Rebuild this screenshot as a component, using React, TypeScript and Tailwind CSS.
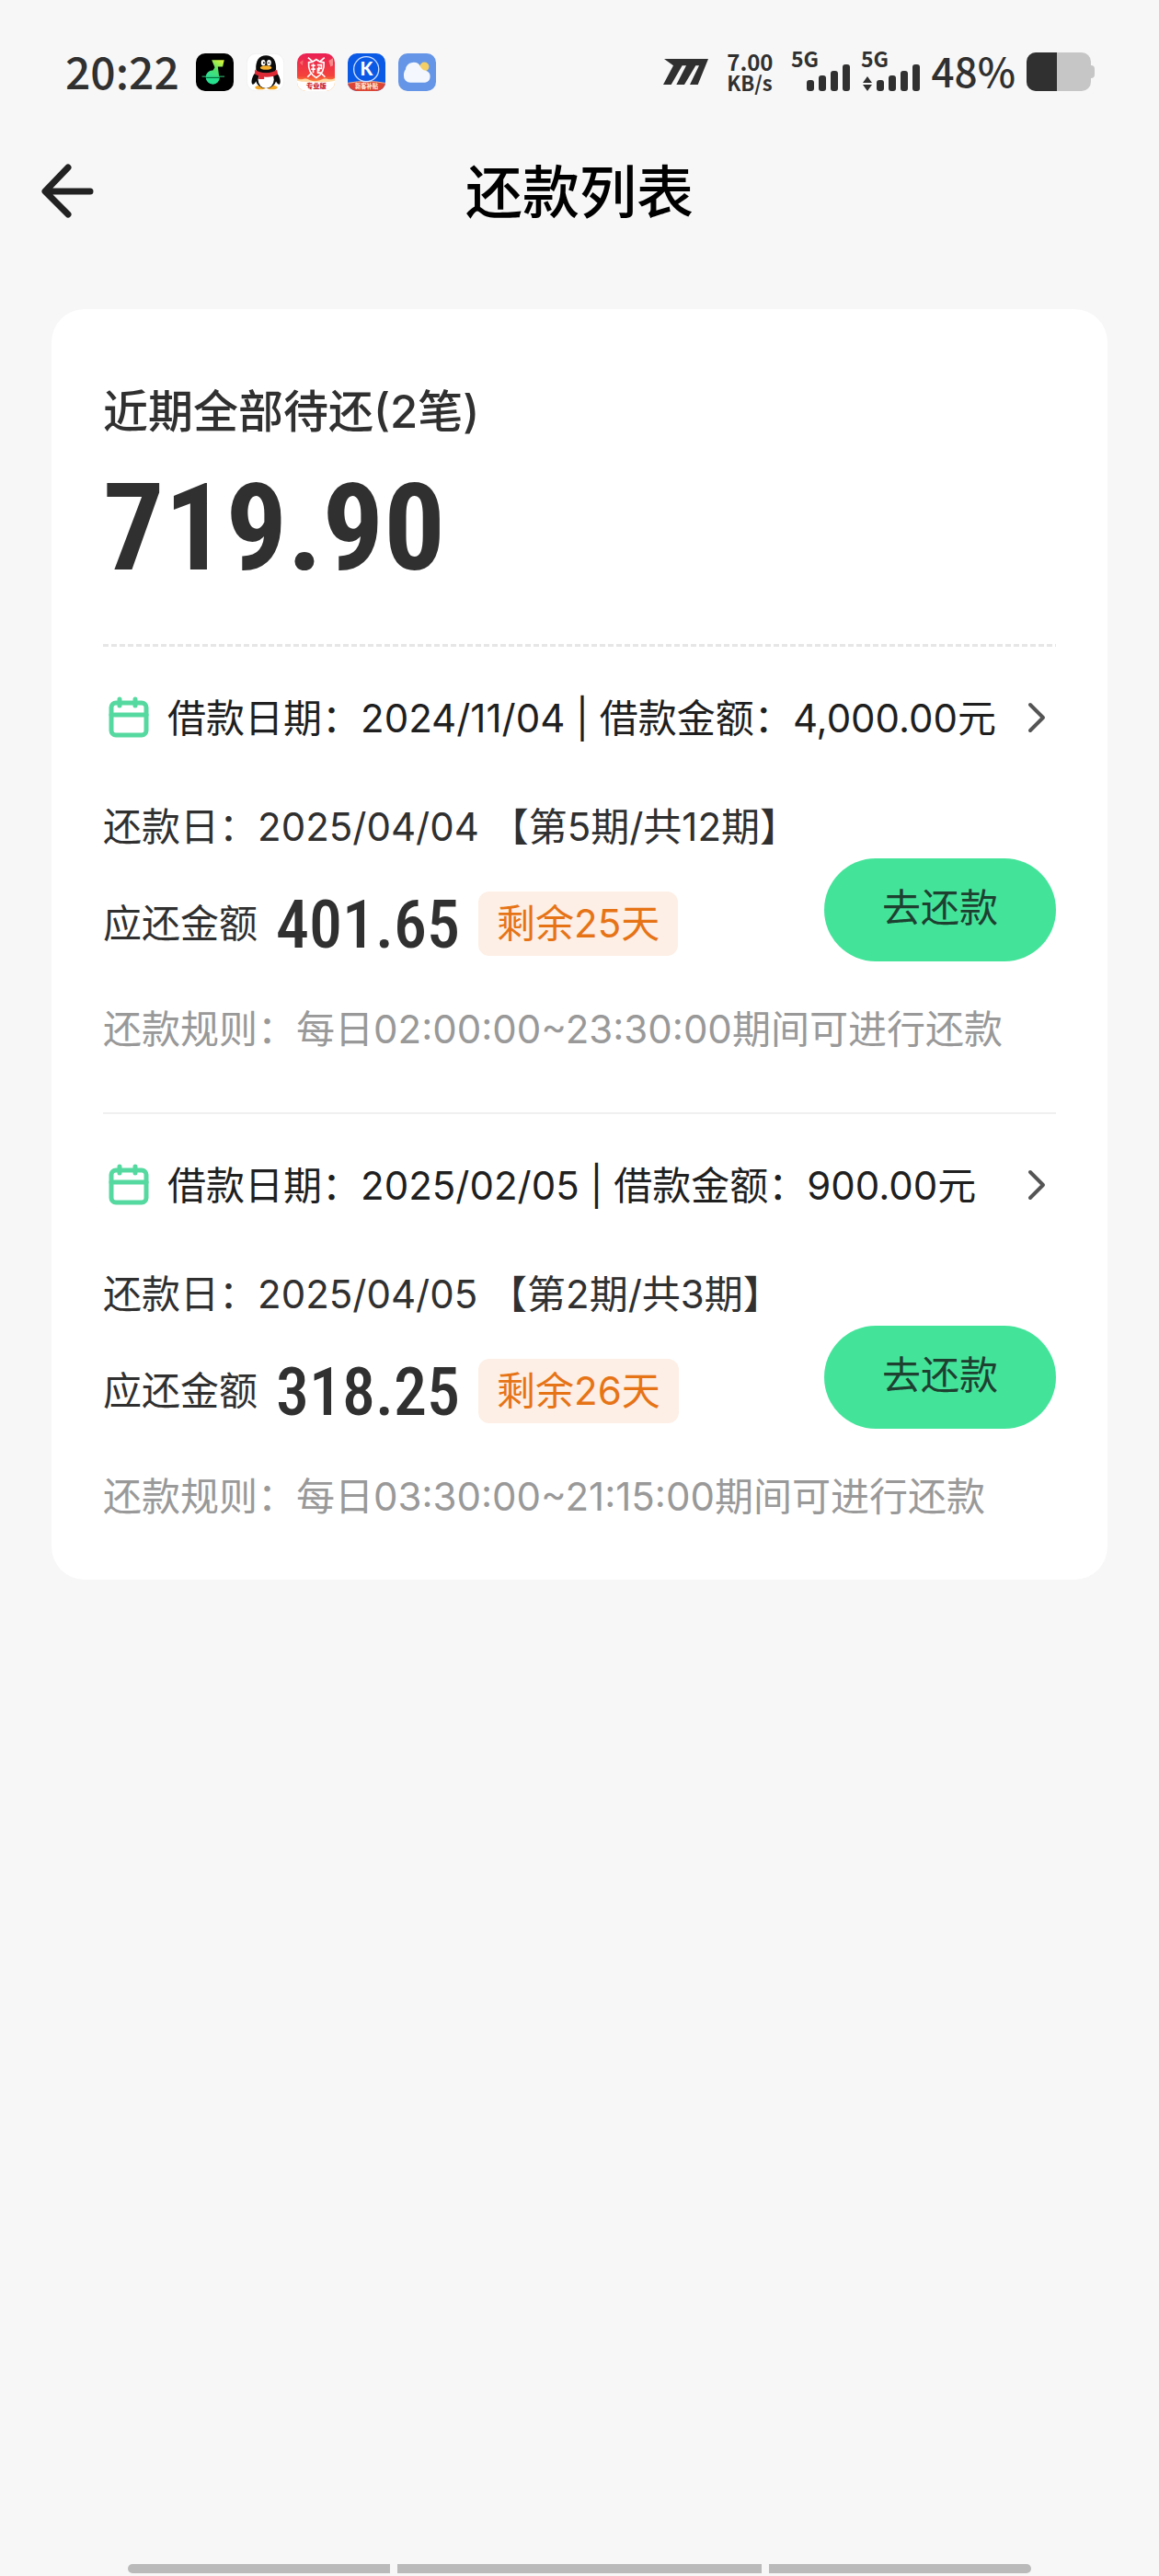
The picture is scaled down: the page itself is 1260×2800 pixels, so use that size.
import React from 'react';

interface Loan {
  id: number;
  loanDate: string;
  loanAmount: string;
  dueDate: string;
  period: string;
  due: string;
  daysLeft: number;
  window: string;
}

const loans: Loan[] = [
  {
    id: 1,
    loanDate: '2024/11/04',
    loanAmount: '4,000.00',
    dueDate: '2025/04/04',
    period: '第5期/共12期',
    due: '401.65',
    daysLeft: 25,
    window: '02:00:00~23:30:00',
  },
  {
    id: 2,
    loanDate: '2025/02/05',
    loanAmount: '900.00',
    dueDate: '2025/04/05',
    period: '第2期/共3期',
    due: '318.25',
    daysLeft: 26,
    window: '03:30:00~21:15:00',
  },
];

function MusicIcon() {
  return (
    <svg viewBox="0 0 124 124" className="w-[41px] h-[41px]">
      <defs>
        <linearGradient id="note" x1="0.8" y1="0" x2="0.3" y2="1">
          <stop offset="0" stopColor="#d8f53c" />
          <stop offset="0.45" stopColor="#4de06a" />
          <stop offset="1" stopColor="#1fe3b0" />
        </linearGradient>
      </defs>
      <rect width="124" height="124" rx="30" fill="#000" />
      <path d="M52 22H93L88 44H72L76 74A22 22 0 1 1 56 56L62 46Z" fill="url(#note)" />
      <path d="M32 76H78V80A22 22 0 0 1 34 80Z" fill="#27e08d" />
      <path d="M20 76H94" stroke="#35c97d" strokeWidth="3" />
      <path d="M34 80H78" stroke="#063" strokeWidth="3" />
    </svg>
  );
}

function PenguinIcon() {
  return (
    <svg viewBox="0 0 124 124" className="w-[41px] h-[41px]">
      <rect x="1" y="1" width="122" height="122" rx="30" fill="#fff" stroke="#ececec" strokeWidth="2" />
      <ellipse cx="46" cy="112" rx="18" ry="7" fill="#f5a623" />
      <ellipse cx="84" cy="112" rx="18" ry="7" fill="#f5a623" />
      <path d="M30 62C16 78 14 98 20 102C25 104 30 94 32 90ZM98 62C112 78 114 98 108 102C103 104 98 94 96 90Z" fill="#0b0b0b" />
      <ellipse cx="64" cy="78" rx="36" ry="37" fill="#0b0b0b" />
      <ellipse cx="64" cy="86" rx="26" ry="29" fill="#fff" />
      <path d="M31 54C29 24 42 7 64 7S99 24 97 54C90 70 38 70 31 54Z" fill="#0b0b0b" />
      <path d="M28 54C46 68 82 68 100 54L103 68C90 77 72 79 58 77V85H40V74L27 68Z" fill="#dd2a35" />
      <ellipse cx="55" cy="31" rx="7" ry="10" fill="#fff" />
      <ellipse cx="74" cy="31" rx="7" ry="10" fill="#fff" />
      <circle cx="57" cy="31" r="3" fill="#111" />
      <path d="M70 33Q73 27 77 33" fill="none" stroke="#111" strokeWidth="3" />
      <ellipse cx="64" cy="47" rx="19" ry="7" fill="#f7b02c" />
    </svg>
  );
}

function ShieldAppIcon() {
  return (
    <svg viewBox="0 0 124 124" className="w-[41px] h-[41px]">
      <defs>
        <linearGradient id="red" x1="0" y1="0" x2="0" y2="1">
          <stop offset="0" stopColor="#ea1f55" />
          <stop offset="0.6" stopColor="#f4433a" />
          <stop offset="0.75" stopColor="#fb8a3c" />
        </linearGradient>
        <clipPath id="shieldClip">
          <rect width="124" height="124" rx="30" />
        </clipPath>
      </defs>
      <g clipPath="url(#shieldClip)">
        <rect width="124" height="124" fill="url(#red)" />
        <path d="M0 82C14 92 24 78 38 86C54 94 66 92 80 86C96 78 108 92 124 82V124H0Z" fill="#ffd9a0" />
        <path d="M0 90C20 96 40 92 62 94S104 94 124 90V124H0Z" fill="#fff" />
        <path d="M104 24L118 16V40L110 44Z" fill="#f98a8a" />
        <path d="M8 30L20 22L18 40Z" fill="#f76a6a" />
      </g>
      <path d="M36 14L50 26M90 14L76 26M34 78L46 66M92 78L80 66" stroke="#fff" strokeWidth="5" />
      <path d="M38 30C48 30 56 26 63 20C70 26 78 30 88 30C90 54 82 70 63 80C44 70 36 54 38 30Z" fill="none" stroke="#fff" strokeWidth="5" />
      <path d="M46 40H60M53 34V64M46 52H60M66 38H80V50H68V64H80M72 44V58" fill="none" stroke="#fff" strokeWidth="5" />
      <text x="63" y="116" textAnchor="middle" fontSize="22" fill="#c9252c" className="font-['Noto_Sans_CJK_SC',sans-serif] font-black">
        专业版
      </text>
    </svg>
  );
}

function KAppIcon() {
  return (
    <svg viewBox="0 0 124 124" className="w-[41px] h-[41px]">
      <defs>
        <clipPath id="kClip">
          <rect width="124" height="124" rx="30" />
        </clipPath>
      </defs>
      <g clipPath="url(#kClip)">
        <rect width="124" height="124" fill="#0b5ae6" />
        <path d="M0 98Q62 86 124 98V124H0Z" fill="#dc4434" />
        <path d="M0 98Q62 86 124 98" fill="none" stroke="#f6b08a" strokeWidth="3" />
      </g>
      <circle cx="61" cy="52" r="41" fill="none" stroke="#cfe0ff" strokeWidth="4" />
      <text x="62" y="73" textAnchor="middle" fontSize="60" fill="#fff" className="font-['Lato',sans-serif] font-black">
        K
      </text>
      <text x="62" y="116" textAnchor="middle" fontSize="19" fill="#ffe3cf" className="font-['Noto_Sans_CJK_SC',sans-serif] font-black">
        新客补贴
      </text>
    </svg>
  );
}

function WeatherIcon() {
  return (
    <svg viewBox="0 0 124 124" className="w-[41px] h-[41px]">
      <rect width="124" height="124" rx="30" fill="#6595e6" />
      <circle cx="86" cy="44" r="15" fill="#f3cf66" />
      <path d="M40 96A22 22 0 0 1 18 72C18 64 20 58 24 53A26 26 0 0 1 74 46C79 52 80 55 90 57A20 20 0 0 1 88 96Z" fill="#f4f8fe" />
    </svg>
  );
}

function Signal({ data = false }: { data?: boolean }) {
  return (
    <svg viewBox="0 0 64 43" className="w-16 h-[43px] overflow-visible" fill="#303030">
      <text x="-1" y="16" fontSize="23" className="font-['Noto_Sans_CJK_SC',sans-serif] font-bold">
        5G
      </text>
      {data && <path d="M1 33L6 26L11 33ZM1 35L6 42L11 35Z" />}
      <rect x="16" y="30" width="8" height="12" rx="3" />
      <rect x="29" y="25" width="8" height="17" rx="3" />
      <rect x="42" y="20" width="8" height="22" rx="3" />
      <rect x="55" y="13" width="8" height="29" rx="3" />
    </svg>
  );
}

function StatusBar() {
  return (
    <div className="flex items-center justify-between pt-14 pl-[71px] pr-[70px] text-[#303030] font-['Noto_Sans_CJK_SC',sans-serif]">
      <div className="flex items-center gap-[14px]">
        <span className="mr-1 pb-1 text-5xl leading-10 font-medium">20:22</span>
        <MusicIcon />
        <PenguinIcon />
        <ShieldAppIcon />
        <KAppIcon />
        <WeatherIcon />
      </div>
      <div className="flex items-center gap-3">
        <svg viewBox="0 0 147 84" className="w-[49px] h-7 mr-2" fill="#303030">
          <path d="M3 0H147L113 84H87L117 22H106L69 84H43L75 22H62L26 84H0L33 22Z" />
        </svg>
        <div className="mr-2 leading-[22px] font-bold">
          <div className="text-2xl leading-[22px]">7.00</div>
          <div className="text-[22px]">KB/s</div>
        </div>
        <Signal />
        <Signal data />
        <span className="pb-1 text-[44px] leading-10 font-medium">48%</span>
        <svg viewBox="0 0 74 42" className="w-[74px] h-[42px]">
          <path d="M10 0H60A10 10 0 0 1 70 10V14Q74 14 74 18V24Q74 28 70 28V32A10 10 0 0 1 60 42H10A10 10 0 0 1 0 32V10A10 10 0 0 1 10 0Z" fill="#c6c6c6" />
          <path d="M10 0H33V42H10A10 10 0 0 1 0 32V10A10 10 0 0 1 10 0Z" fill="#303030" />
        </svg>
      </div>
    </div>
  );
}

function LoanItem({ loan }: { loan: Loan }) {
  return (
    <li className="pt-12 pb-[60px] border-b-2 border-[#f0f0f0] last:border-b-0 text-[42px] leading-[60px] text-[#303030]">
      <a href={`#loan-${loan.id}`} className="flex items-center gap-[14px] text-[#1f1f1f]">
        <svg viewBox="0 0 56 56" className="w-14 h-14 shrink-0" fill="none" stroke="#56d9a0" strokeWidth="5" strokeLinecap="round">
          <rect x="9" y="11" width="38" height="35" rx="5" />
          <path d="M9 24H47" />
          <path d="M18 7V14M35 7V14" />
        </svg>
        <span className="grow whitespace-nowrap">
          借款日期：{loan.loanDate} | 借款金额：{loan.loanAmount}元
        </span>
        <svg viewBox="0 0 42 42" className="w-[42px] h-[42px] shrink-0" fill="none" stroke="#555" strokeWidth="4" strokeLinecap="round" strokeLinejoin="round">
          <path d="M14 6L28 20L14 34" />
        </svg>
      </a>
      <p className="mt-[58px] whitespace-nowrap">
        还款日：{loan.dueDate} 【{loan.period}】
      </p>
      <div className="mt-1 flex items-end justify-between">
        <div className="pb-[6px] flex items-center gap-5">
          <span>应还金额</span>
          <span className="pt-1 text-7xl leading-[60px] font-medium font-['Roboto_Condensed',sans-serif]">{loan.due}</span>
          <span className="px-5 rounded-xl bg-[#fdefe5] text-[#e67417] leading-[70px]">剩余{loan.daysLeft}天</span>
        </div>
        <button className="w-[252px] h-28 pb-1 rounded-full bg-[#44e39a] text-[#1d4030]">去还款</button>
      </div>
      <p className="mt-11 text-[#999] whitespace-nowrap">还款规则：每日{loan.window}期间可进行还款</p>
    </li>
  );
}

export default function App() {
  return (
    <div className="min-h-screen flex flex-col bg-[#f7f7f7] font-['Inter','Noto_Sans_CJK_SC',sans-serif]">
      <StatusBar />

      <header className="grid grid-cols-[1fr_auto_1fr] items-center px-10 mt-[74px]">
        <button aria-label="返回" className="justify-self-start">
          <svg viewBox="0 0 66 64" className="w-[66px] h-16" fill="none" stroke="#222" strokeWidth="7" strokeLinecap="round" strokeLinejoin="round">
            <path d="M58 32H10M34 6L9 32L34 57" />
          </svg>
        </button>
        <h1 className="pt-1 text-[62px] leading-[64px] font-medium text-black">还款列表</h1>
      </header>

      <main className="mx-14 mt-[94px] px-14 rounded-[36px] bg-white">
        <section className="pt-20 pb-16 text-[#303030]">
          <h2 className="text-[49px] leading-[64px] font-medium">近期全部待还(2笔)</h2>
          <p className="mt-8 text-[132px] leading-[124px] font-bold font-['Roboto_Condensed',sans-serif]">719.90</p>
        </section>
        <div className="h-[3px] bg-[repeating-linear-gradient(90deg,#e6e6e6_0_6px,#fff_6px_9px)]" />
        <ul>
          {loans.map(loan => (
            <LoanItem key={loan.id} loan={loan} />
          ))}
        </ul>
      </main>

      {/* System gesture bar */}
      <div className="mt-auto mb-[3px] mx-[139px] flex gap-2">
        <div className="h-[10px] w-[285px] rounded-l-full bg-[#bababa]" />
        <div className="h-[10px] grow bg-[#bababa]" />
        <div className="h-[10px] w-[285px] rounded-r-full bg-[#bababa]" />
      </div>
    </div>
  );
}
